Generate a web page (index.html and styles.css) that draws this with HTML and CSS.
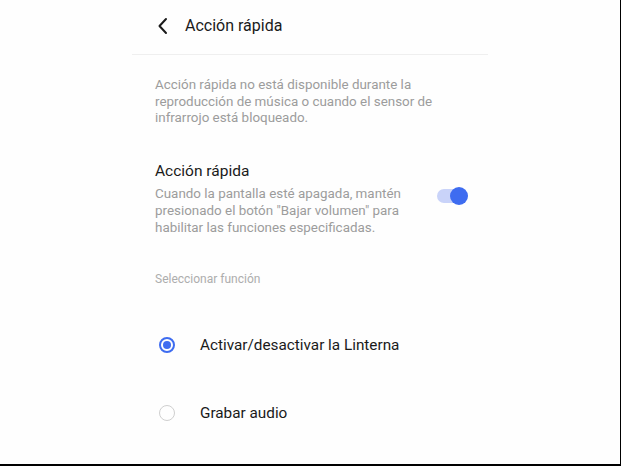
FILE: index.html
```html
<!DOCTYPE html>
<html>
<head>
    <meta charset="utf-8">
    <title>Acción rápida</title>
	<link rel="stylesheet" href="styles.css">
</head>
<body>
    <div class="screen">
	  <div class="page">
	    <!--标题栏-->
	    <div class="topbar">
		  <svg class="back" width="12" height="18" viewBox="0 0 12 18">
		    <polyline points="9,2 2.5,9 9,16" fill="none" stroke="#1a1a1a" stroke-width="2" stroke-linecap="round" stroke-linejoin="round"/>
		  </svg>
		  <span class="title">Acción rápida</span>
		</div>

		<div class="content">
		  <p class="notice">Acción rápida no está disponible durante la reproducción de música o cuando el sensor de infrarrojo está bloqueado.</p>

		  <!--开关-->
		  <div class="setting">
		    <div class="setting-text">
		      <div class="setting-name">Acción rápida</div>
			  <div class="setting-desc">Cuando la pantalla esté apagada, mantén presionado el botón "Bajar volumen" para habilitar las funciones especificadas.</div>
			</div>
			<div class="switch on"><span class="knob"></span></div>
		  </div>

		  <div class="group-label">Seleccionar función</div>

		  <!--选项-->
		  <div class="option">
		    <span class="radio checked"></span>
			<span class="option-text">Activar/desactivar la Linterna</span>
		  </div>
		  <div class="option">
		    <span class="radio"></span>
			<span class="option-text">Grabar audio</span>
		  </div>
		</div>
	  </div>
	</div>
</body>
</html>
```

FILE: styles.css
```css
	body{
	    margin:0;
		background:#fff;
		font-family:Roboto,"Noto Sans",sans-serif;
	}
	.screen{
	    width:620px;
		height:464px;
		border-right:1px solid #000;
		border-bottom:2px solid #000;
		overflow:hidden;
		background:#fefefe;
	}
	.page{
	    width:356px;
		margin-left:132px;
	}
	.topbar{
	    height:51px;
		display:flex;
		align-items:center;
		padding-left:25px;
		padding-bottom:3px;
		border-bottom:1px solid #efefef;
	}
	.back{
	    margin-right:16px;
	}
	.title{
	    font-size:16px;
		color:#1a1a1a;
	}
	.content{
	    padding:0 20px 0 23px;
	}
	.notice{
	    margin:22px 0 0 0;
		font-size:13.4px;
		line-height:16.7px;
		color:#9c9c9c;
		padding-right:20px;
	}
	/*开关部分*/
	.setting{
	    display:flex;
		align-items:flex-start;
		margin-top:34px;
	}
	.setting-text{
	    width:262px;
	}
	.setting-name{
	    font-size:15.5px;
		line-height:20px;
		color:#1a1a1a;
	}
	.setting-desc{
	    margin-top:4px;
		font-size:13.4px;
		line-height:17px;
		color:#9c9c9c;
	}
	.switch{
	    position:relative;
		width:29px;
		height:14px;
		border-radius:7px;
		background:#c9d3f9;
		margin-top:28px;
		margin-left:auto;
		margin-right:2px;
	}
	.switch .knob{
	    position:absolute;
		right:-2px;
		top:-2px;
		width:18px;
		height:18px;
		border-radius:50%;
		background:#3e6cf0;
	}
	.group-label{
	    margin-top:35px;
		font-size:12px;
		line-height:16px;
		color:#adadad;
	}
	/*选项*/
	.option{
	    height:68px;
		display:flex;
		align-items:center;
	}
	.group-label + .option{
	    margin-top:24px;
	}
	.radio{
	    box-sizing:border-box;
		width:16px;
		height:16px;
		border-radius:50%;
		border:1.5px solid #cfcfcf;
		margin-left:4px;
		margin-right:25px;
		position:relative;
	}
	.radio.checked{
	    border:2px solid #3e6cf0;
	}
	.radio.checked::after{
	    content:"";
		position:absolute;
		left:2px;
		top:2px;
		width:8px;
		height:8px;
		border-radius:50%;
		background:#3e6cf0;
	}
	.option-text{
	    font-size:15.3px;
		color:#1a1a1a;
	}
```
